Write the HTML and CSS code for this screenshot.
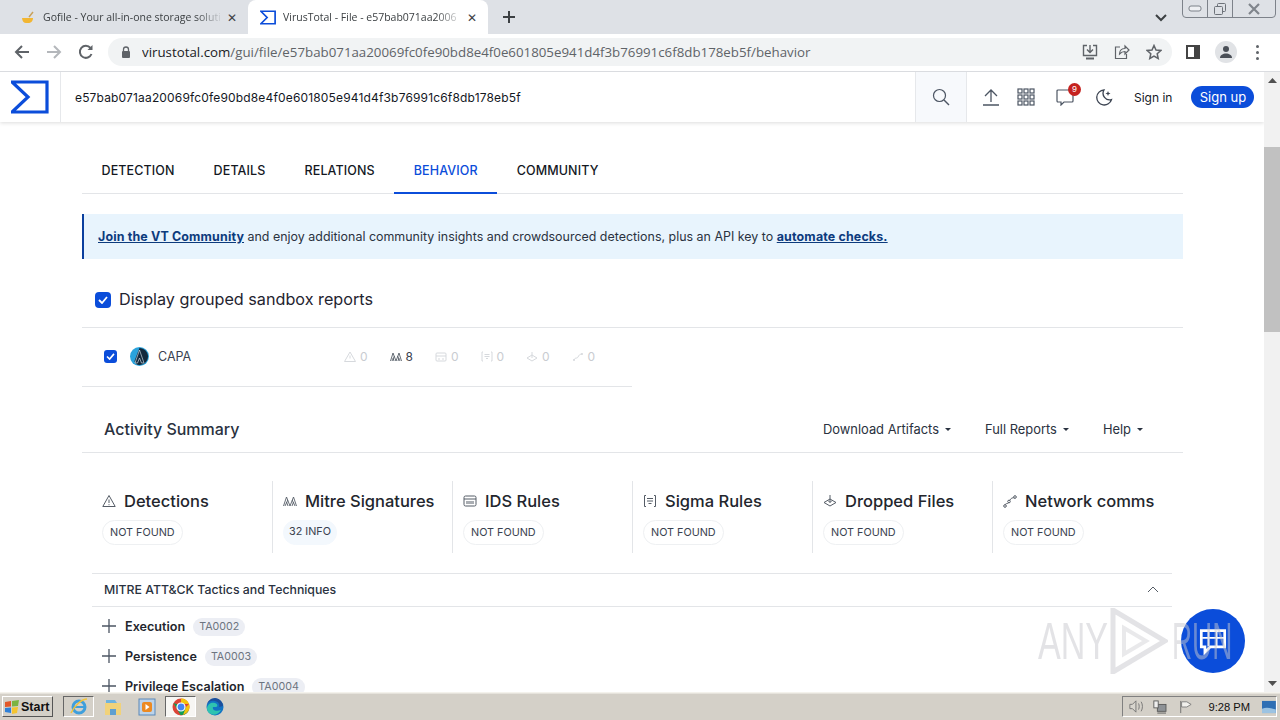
FILE: index.html
```html
<!DOCTYPE html>
<html lang="en">
<head>
  <meta charset="UTF-8">
  <title>VirusTotal - File</title>
  <link rel="stylesheet" href="styles.css">
</head>
<body>

<!-- browser tabs -->
<div class="tab-strip">
  <div class="tab">
    <svg class="tab-icon" width="16" height="16" viewBox="0 0 16 16"><path d="M2 9h11c0 3-2 5-5 5H6c-2 0-4-2-4-5z" fill="#f2b632"/><path d="M9 8l4-5" stroke="#c9a15a" stroke-width="1.5"/></svg>
    <span class="tab-title">Gofile - Your all-in-one storage soluti</span>
    <span class="tab-close">✕</span>
  </div>
  <div class="tab tab-active">
    <svg class="tab-icon" width="16" height="15" viewBox="0 0 18 16"><path d="M1 1h16v14H1l7-7z" fill="none" stroke="#0b4dda" stroke-width="1.9"/></svg>
    <span class="tab-title">VirusTotal - File - e57bab071aa2006</span>
    <span class="tab-close">✕</span>
  </div>
  <svg class="new-tab" width="14" height="14" viewBox="0 0 14 14"><path d="M7 1v12M1 7h12" stroke="#3c4043" stroke-width="2"/></svg>
  <svg class="tab-search" width="12" height="8" viewBox="0 0 12 8"><path d="M1 1l5 5 5-5" fill="none" stroke="#3c4043" stroke-width="2"/></svg>
  <div class="window-buttons">
    <div class="win-btn win-min"><svg width="14" height="8" viewBox="0 0 14 8"><rect x="1" y="1" width="12" height="5" rx="2" fill="#eef0f3" stroke="#7d828a"/></svg></div>
    <div class="win-btn win-max"><svg width="14" height="14" viewBox="0 0 14 14"><rect x="4.500" y="1.500" width="8" height="8" rx="1" fill="none" stroke="#6d7279"/><rect x="1.500" y="4.500" width="8" height="8" rx="1" fill="#dee1e6" stroke="#6d7279"/></svg></div>
    <div class="win-btn win-close"><svg width="14" height="12" viewBox="0 0 14 12"><path d="M2 1l10 10M12 1L2 11" stroke="#80858c" stroke-width="2.200"/></svg></div>
  </div>
</div>

<!-- address bar -->
<div class="toolbar">
  <svg class="nav-icon" width="16" height="16" viewBox="0 0 16 16"><path d="M15 8H2M8 2L2 8l6 6" fill="none" stroke="#5f6368" stroke-width="2"/></svg>
  <svg class="nav-icon nav-off" width="16" height="16" viewBox="0 0 16 16"><path d="M1 8h13M8 2l6 6-6 6" fill="none" stroke="#b4b7bb" stroke-width="2"/></svg>
  <svg class="nav-icon" width="16" height="16" viewBox="0 0 16 16"><path d="M13.500 10A6 6 0 1 1 12.500 4" fill="none" stroke="#5f6368" stroke-width="2"/><path d="M14.500 1v5h-5z" fill="#5f6368"/></svg>
  <div class="omnibox">
    <svg class="lock" width="10" height="12" viewBox="0 0 10 12"><path d="M2.500 5V3.500a2.500 2.500 0 0 1 5 0V5" fill="none" stroke="#5f6368" stroke-width="1.300"/><rect x="1" y="5" width="8" height="7" rx="1" fill="#5f6368"/></svg>
    <div class="url"><span class="url-host">virustotal.com</span>/gui/file/e57bab071aa20069fc0fe90bd8e4f0e601805e941d4f3b76991c6f8db178eb5f/behavior</div>
    <svg class="omni-icon" width="16" height="16" viewBox="0 0 16 16"><path d="M5 1.500H1.500v10h13v-10H11M8 1v7M5 5.500L8 8.500l3-3" fill="none" stroke="#5f6368" stroke-width="1.400"/><path d="M4 14.500h8" stroke="#5f6368" stroke-width="2"/></svg>
    <svg class="omni-icon" width="16" height="16" viewBox="0 0 16 16"><path d="M6 3H1.500v11.500h11V10M5.500 10c0-4 3-5.500 5.500-5.500V2l4 4-4 4V7.500c-2 0-4 .8-5.500 2.500z" fill="none" stroke="#5f6368" stroke-width="1.200"/></svg>
    <svg class="omni-icon" width="16" height="16" viewBox="0 0 16 16"><path d="M8 1.500l2 4.500 4.800.5-3.600 3.200 1 4.800L8 12l-4.200 2.500 1-4.800L1.200 6.500 6 6z" fill="none" stroke="#5f6368" stroke-width="1.500"/></svg>
  </div>
  <svg class="side-panel" width="14" height="14" viewBox="0 0 14 14"><rect x="1" y="1" width="12" height="12" fill="none" stroke="#444" stroke-width="2"/><rect x="8" y="1" width="5" height="12" fill="#444"/></svg>
  <div class="profile"><svg width="14" height="14" viewBox="0 0 14 14"><circle cx="7" cy="4" r="3" fill="#4a4f57"/><path d="M1 13c0-3 3-4.500 6-4.500s6 1.500 6 4.500z" fill="#4a4f57"/></svg></div>
  <div class="kebab"><i></i><i></i><i></i></div>
</div>

<div class="viewport">
  <div class="page">

    <!-- site header -->
    <div class="site-header">
      <div class="logo-cell">
        <svg width="38" height="34" viewBox="0 0 38 34"><path d="M1 2h35v30H1l16-15z" fill="none" stroke="#0b4dda" stroke-width="3.200"/></svg>
      </div>
      <div class="search-text">e57bab071aa20069fc0fe90bd8e4f0e601805e941d4f3b76991c6f8db178eb5f</div>
      <div class="search-btn">
        <svg width="18" height="18" viewBox="0 0 18 18"><circle cx="7.500" cy="7.500" r="6" fill="none" stroke="#4c5563" stroke-width="1.200"/><path d="M12 12l5 5" stroke="#4c5563" stroke-width="1.400"/></svg>
      </div>
      <div class="header-actions">
        <svg class="upload-icon" width="18" height="18" viewBox="0 0 18 18"><path d="M9 14V2M3 8l6-6 6 6M1 17h16" fill="none" stroke="#4c5563" stroke-width="1.300"/></svg>
        <svg width="18" height="18" viewBox="0 0 18 18" fill="none" stroke="#4c5563" stroke-width="1.200"><rect x="1" y="1" width="4" height="4"/><rect x="7" y="1" width="4" height="4"/><rect x="13" y="1" width="4" height="4"/><rect x="1" y="7" width="4" height="4"/><rect x="7" y="7" width="4" height="4"/><rect x="13" y="7" width="4" height="4"/><rect x="1" y="13" width="4" height="4"/><rect x="7" y="13" width="4" height="4"/><rect x="13" y="13" width="4" height="4"/></svg>
        <div class="chat-icon">
          <svg width="18" height="18" viewBox="0 0 18 18"><path d="M2 2h14a1 1 0 0 1 1 1v10a1 1 0 0 1-1 1H8l-3 3v-3H2a1 1 0 0 1-1-1V3a1 1 0 0 1 1-1z" fill="none" stroke="#4c5563" stroke-width="1.200"/></svg>
          <span class="chat-badge">9</span>
        </div>
        <svg width="18" height="18" viewBox="0 0 18 18"><path d="M9 2a7.500 7.500 0 1 0 7.500 9.500A6.500 6.500 0 0 1 9 2z" fill="none" stroke="#3a4250" stroke-width="1.300"/><path d="M13 3l.7 1.800 1.800.7-1.800.7-.7 1.800-.7-1.800-1.800-.7 1.800-.7z" fill="#3a4250"/></svg>
        <span class="sign-in">Sign in</span>
        <span class="sign-up">Sign up</span>
      </div>
    </div>

    <!-- file tabs -->
    <div class="file-tabs">
      <div class="file-tab">DETECTION</div>
      <div class="file-tab">DETAILS</div>
      <div class="file-tab">RELATIONS</div>
      <div class="file-tab file-tab-active">BEHAVIOR</div>
      <div class="file-tab">COMMUNITY</div>
    </div>

    <div class="notice">
      <a class="notice-link">Join the VT Community</a> and enjoy additional community insights and crowdsourced detections, plus an API key to <a class="notice-link">automate checks.</a>
    </div>

    <div class="group-row">
      <span class="check check-big"><svg width="10" height="8" viewBox="0 0 10 8"><path d="M1 4l3 3 5-6" fill="none" stroke="#fff" stroke-width="1.800"/></svg></span>
      <span class="group-label">Display grouped sandbox reports</span>
    </div>

    <div class="sandbox-row">
      <span class="check"><svg width="9" height="7" viewBox="0 0 10 8"><path d="M1 4l3 3 5-6" fill="none" stroke="#fff" stroke-width="1.800"/></svg></span>
      <svg class="capa-logo" width="19" height="19" viewBox="0 0 19 19"><circle cx="9.500" cy="9.500" r="9.500" fill="#2aa3dc"/><path d="M9.500 1C14 1 18 5 18 9.500S14 18 9.500 18c-3 0-5-2-5-4z" fill="#12293d"/><path d="M9.500 3L5 16h2.500l2-5 2 5H14z" fill="#12293d" stroke="#e8f3fa" stroke-width=".6"/></svg>
      <span class="sandbox-name">CAPA</span>
      <div class="sandbox-stats">
        <span class="stat"><svg width="12" height="11" viewBox="0 0 12 11"><path d="M6 1l5.500 9.500H.5zM6 4.500v3" fill="none" stroke="#d6d9dd"/></svg>0</span>
        <span class="stat stat-on"><svg width="12" height="11" viewBox="0 0 12 11"><path d="M.5 10L3 2l3 8 3-8 2.500 8M2 10l2.500-5M7.500 5L10 10M4 10l-1-3M9 7l-1 3" fill="none" stroke="#555c66" stroke-width=".9"/></svg>8</span>
        <span class="stat"><svg width="12" height="11" viewBox="0 0 12 11"><rect x="1" y="2" width="10" height="8" rx="1" fill="none" stroke="#d6d9dd"/><path d="M1 5h10M4 7v2M8 7v2" stroke="#d6d9dd"/></svg>0</span>
        <span class="stat"><svg width="12" height="11" viewBox="0 0 12 11"><path d="M2 1H1v9h1M10 1h1v9h-1M3.500 3.500h5M3.500 5.500h5M5 7.500h2" fill="none" stroke="#d6d9dd"/></svg>0</span>
        <span class="stat"><svg width="12" height="11" viewBox="0 0 12 11"><path d="M6 4l5 3-5 3-5-3zM6 1v6" fill="none" stroke="#d6d9dd"/></svg>0</span>
        <span class="stat"><svg width="12" height="11" viewBox="0 0 12 11"><path d="M2 9c1-3 3-1 4-3s2-3 4-3" fill="none" stroke="#d6d9dd"/><circle cx="2" cy="9" r="1" fill="#d6d9dd"/><circle cx="10" cy="3" r="1" fill="#d6d9dd"/></svg>0</span>
      </div>
    </div>

    <!-- activity summary -->
    <div class="activity-head">
      <div class="activity-title">Activity Summary</div>
      <div class="activity-menu">
        <span class="caret-item">Download Artifacts</span>
        <span class="caret-item">Full Reports</span>
        <span class="caret-item">Help</span>
      </div>
    </div>

    <div class="summary-grid">
      <div class="summary-cell">
        <div class="summary-title"><svg width="14" height="14" viewBox="0 0 14 14"><path d="M7 1.500l6.200 11H.8zM7 5.500v3.500M7 10.200v1" fill="none" stroke="#555c66"/></svg>Detections</div>
        <span class="pill">NOT FOUND</span>
      </div>
      <div class="summary-cell">
        <div class="summary-title"><svg width="14" height="14" viewBox="0 0 14 14"><path d="M.5 12L3.500 3l3.500 9 3.500-9 3 9M2 12l2.800-6M9.200 6L12 12M5 12L3.500 8M10.500 8L9 12" fill="none" stroke="#555c66" stroke-width=".9"/></svg>Mitre Signatures</div>
        <span class="pill pill-info">32 INFO</span>
      </div>
      <div class="summary-cell">
        <div class="summary-title"><svg width="14" height="14" viewBox="0 0 14 14"><rect x="1" y="2" width="12" height="10" rx="1.500" fill="none" stroke="#555c66"/><path d="M1 5h12M4 7v3M6 7v3M8 7v3M10 7v3" stroke="#555c66"/></svg>IDS Rules</div>
        <span class="pill">NOT FOUND</span>
      </div>
      <div class="summary-cell">
        <div class="summary-title"><svg width="14" height="14" viewBox="0 0 14 14"><path d="M3 1.500H1.500v11H3M11 1.500h1.500v11H11M4 4.500h6M4 7h6M5.500 9.500h3" fill="none" stroke="#555c66"/></svg>Sigma Rules</div>
        <span class="pill">NOT FOUND</span>
      </div>
      <div class="summary-cell">
        <div class="summary-title"><svg width="14" height="14" viewBox="0 0 14 14"><path d="M7 5l6 3.500L7 12 1 8.500zM7 1v7.500M5 6.500l2 2 2-2" fill="none" stroke="#555c66"/></svg>Dropped Files</div>
        <span class="pill">NOT FOUND</span>
      </div>
      <div class="summary-cell">
        <div class="summary-title"><svg width="14" height="14" viewBox="0 0 14 14"><path d="M2 12c0-4 3-1 4-4s3-5 6-4" fill="none" stroke="#555c66"/><circle cx="2" cy="12" r="1.300" fill="#fff" stroke="#555c66"/><circle cx="6" cy="7.500" r="1.300" fill="#fff" stroke="#555c66"/><circle cx="12" cy="3" r="1.300" fill="#fff" stroke="#555c66"/></svg>Network comms</div>
        <span class="pill">NOT FOUND</span>
      </div>
    </div>

    <!-- mitre table -->
    <div class="mitre">
      <div class="mitre-head">
        <span>MITRE ATT&amp;CK Tactics and Techniques</span>
        <svg width="12" height="7" viewBox="0 0 12 7"><path d="M1 6l5-5 5 5" fill="none" stroke="#555c66"/></svg>
      </div>
      <div class="tactic"><svg width="14" height="14" viewBox="0 0 14 14"><path d="M7 0v14M0 7h14" stroke="#4c5563" stroke-width="1.300"/></svg><span class="tactic-name">Execution</span><span class="tactic-id">TA0002</span></div>
      <div class="tactic"><svg width="14" height="14" viewBox="0 0 14 14"><path d="M7 0v14M0 7h14" stroke="#4c5563" stroke-width="1.300"/></svg><span class="tactic-name">Persistence</span><span class="tactic-id">TA0003</span></div>
      <div class="tactic"><svg width="14" height="14" viewBox="0 0 14 14"><path d="M7 0v14M0 7h14" stroke="#4c5563" stroke-width="1.300"/></svg><span class="tactic-name">Privilege Escalation</span><span class="tactic-id">TA0004</span></div>
    </div>

    <!-- overlays -->
    <div class="chat-fab">
      <svg width="30" height="27" viewBox="0 0 32 30"><path d="M3 3h26v18H13l-6 6v-6H3z" fill="none" stroke="#fff" stroke-width="3"/><path d="M11 4v16M20 4v16M4 11h24" stroke="#fff" stroke-width="2"/></svg>
    </div>
    <div class="watermark">
      <span class="wm-any">ANY</span>
      <svg class="wm-play" width="58" height="66" viewBox="0 0 58 66"><path d="M3 2v62l52-31z" fill="none" stroke="#c8c8cd" stroke-opacity=".5" stroke-width="5"/><path d="M14 20v26l22-13z" fill="none" stroke="#c8c8cd" stroke-opacity=".4" stroke-width="4"/></svg>
      <span class="wm-run">RUN</span>
    </div>
  </div>

  <div class="scrollbar">
    <div class="scroll-arrow"><svg width="9" height="5" viewBox="0 0 9 5"><path d="M4.500 0L9 5H0z" fill="#505050"/></svg></div>
    <div class="scroll-track"><div class="scroll-thumb"></div></div>
    <div class="scroll-arrow"><svg width="9" height="5" viewBox="0 0 9 5"><path d="M0 0h9L4.500 5z" fill="#505050"/></svg></div>
  </div>
</div>

<!-- windows taskbar -->
<div class="taskbar">
  <div class="start-btn">
    <svg width="16" height="14" viewBox="0 0 16 14"><path d="M1 2l6-1v5.500L1 7z" fill="#e2582a"/><path d="M8 1l7-1-1 6-6 .5z" fill="#7cb342"/><path d="M1 8l6-.5V13l-6-1z" fill="#2f80d8"/><path d="M8 7.500l6-.5-1 6-5 1z" fill="#f4c430"/></svg>
    <span>Start</span>
  </div>
  <div class="task-btn">
    <svg width="20" height="20" viewBox="0 0 20 20"><circle cx="10" cy="10" r="6" fill="none" stroke="#3f9fdc" stroke-width="3"/><path d="M4 10h12" stroke="#3f9fdc" stroke-width="2"/><path d="M2 16C6 8 13 2 18 2" fill="none" stroke="#f2c33a" stroke-width="1.500"/></svg>
  </div>
  <div class="task-icon">
    <svg width="18" height="18" viewBox="0 0 18 18"><path d="M1 5h16v12H1z" fill="#f1d27a"/><path d="M2 2h9l2 3H2z" fill="#6fb3df"/><path d="M6 11h6v6H6z" fill="#5f9fd0"/></svg>
  </div>
  <div class="task-icon task-player">
    <svg width="18" height="18" viewBox="0 0 18 18"><rect x="1" y="1" width="16" height="16" fill="#bcd3ea" stroke="#5a88b8"/><rect x="4" y="4" width="10" height="10" rx="2" fill="#ec8a22"/><path d="M7.500 6l4 3-4 3z" fill="#fff"/></svg>
  </div>
  <div class="task-btn task-btn-on">
    <svg width="18" height="18" viewBox="0 0 18 18"><circle cx="9" cy="9" r="8.500" fill="#dc4437"/><path d="M9 .5A8.500 8.500 0 0 1 17 6H9z" fill="#f4c20d"/><path d="M1.500 5L5 11l3.500 6A8.500 8.500 0 0 0 16.500 13L13 9z" fill="#0f9d58"/><path d="M17 6a8.500 8.500 0 0 1-6 11l3-8z" fill="#f4c20d"/><circle cx="9" cy="9" r="4" fill="#4285f4" stroke="#fff" stroke-width="1.200"/></svg>
  </div>
  <div class="task-icon">
    <svg width="18" height="18" viewBox="0 0 18 18"><circle cx="9" cy="9" r="8.500" fill="#1273c4"/><path d="M1 10c1-5 5-6 8-5 3 1 3 4 1 4H7c-1 3 3 5 8 3-2 4-7 6-10 4-3-1-4-3-4-6z" fill="#2fc3b0"/><path d="M17 8c0-4-4-8-8-8C5 0 2 3 1 6c2-3 5-4 8-3 4 1 5 4 4 6z" fill="#1c4f9c"/></svg>
  </div>
  <div class="tray">
    <svg width="17" height="15" viewBox="0 0 17 15"><path d="M1 5h3l4-4v13l-4-4H1z" fill="#d8d5ce" stroke="#6e6e6e"/><path d="M11 4c1 2 1 5 0 7M14 2c2 3 2 8 0 11" fill="none" stroke="#6e6e6e"/></svg>
    <svg width="16" height="16" viewBox="0 0 16 16"><rect x="5" y="5" width="10" height="8" fill="#8e9296" stroke="#555"/><rect x="1" y="1" width="5" height="8" fill="#efefef" stroke="#555"/><path d="M5 15h10" stroke="#555"/></svg>
    <svg class="tray-flag" width="16" height="16" viewBox="0 0 16 16"><path d="M2 1v14" stroke="#666"/><path d="M3 2h6l5 3-5 3H3z" fill="#f1f0ec" stroke="#777"/></svg>
    <span class="clock">9:28 PM</span>
    <svg class="show-desktop" width="16" height="14" viewBox="0 0 16 14"><rect width="16" height="14" fill="#2f6fb4"/><path d="M0 9c5-2 10-1 16 1v4H0z" fill="#9cc3e2"/></svg>
  </div>
</div>

</body>
</html>
```

FILE: styles.css
```css
/* whole window */
html, body {
  margin: 0;
  height: 720px;
  overflow: hidden;
}
body {
  display: flex;
  flex-direction: column;
  background-color: #fff;
  font-family: Inter, "Liberation Sans", sans-serif;
  color: #1f2430;
}

/* browser tabs */
.tab-strip {
  height: 34px;
  flex-shrink: 0;
  display: flex;
  align-items: center;
  padding-left: 8px;
  background-color: #dee1e6;
  position: relative;
}
.tab {
  width: 240px;
  height: 34px;
  box-sizing: border-box;
  display: flex;
  align-items: center;
  padding: 0 11px 0 12px;
  font-family: "Open Sans", "Liberation Sans", sans-serif;
  font-size: 10.5px;
  color: #3c4043;
}
.tab-active {
  background-color: #fff;
  border-radius: 8px 8px 0 0;
}
.tab-icon {
  flex-shrink: 0;
  margin-right: 7px;
}
.tab-title {
  flex: 1;
  white-space: nowrap;
  -webkit-mask-image: linear-gradient(to right, #000 85%, transparent 100%);
  mask-image: linear-gradient(to right, #000 85%, transparent 100%);
}
.tab-close {
  margin-left: 4px;
  font-size: 12px;
  color: #3c4043;
}
.new-tab {
  margin-left: 14px;
}
.tab-search {
  margin-left: auto;
  margin-right: 113px;
  margin-top: 2px;
}
.window-buttons {
  position: absolute;
  top: -1px;
  right: 4px;
  display: flex;
  height: 17px;
  border: 1px solid #7d828a;
  border-radius: 0 0 4px 4px;
}
.win-btn {
  display: flex;
  align-items: center;
  justify-content: center;
  border-right: 1px solid #7d828a;
}
.win-min { width: 24px; }
.win-max { width: 24px; }
.win-close { width: 42px; border-right: 0; }

/* address bar */
.toolbar {
  height: 38px;
  flex-shrink: 0;
  box-sizing: border-box;
  display: flex;
  align-items: center;
  padding: 0 0 1px 14px;
  background-color: #fff;
  border-bottom: 1px solid #dadce0;
}
.nav-icon {
  margin-right: 16px;
}
.omnibox {
  width: 1064px;
  height: 28px;
  margin-left: -2px;
  flex-shrink: 0;
  box-sizing: border-box;
  display: flex;
  align-items: center;
  padding: 0 10px 0 13px;
  border-radius: 14px;
  background-color: #f1f3f4;
}
.lock {
  margin-right: 11px;
}
.url {
  flex: 1;
  font-family: "Open Sans", "Liberation Sans", sans-serif;
  font-size: 13.3px;
  color: #5f6368;
  white-space: nowrap;
  overflow: hidden;
}
.url-host {
  color: #202124;
}
.omni-icon {
  margin-left: 16px;
}
.side-panel {
  margin-left: 14px;
}
.profile {
  width: 22px;
  height: 22px;
  margin-left: 15px;
  display: flex;
  align-items: center;
  justify-content: center;
  border-radius: 50%;
  background-color: #e1e3e6;
}
.kebab {
  margin-left: 19px;
  display: flex;
  flex-direction: column;
  gap: 3px;
}
.kebab i {
  width: 3px;
  height: 3px;
  border-radius: 50%;
  background-color: #5f6368;
}

/* page + scrollbar */
.viewport {
  flex: 1;
  display: flex;
  min-height: 0;
}
.page {
  flex: 1;
  position: relative;
  overflow: hidden;
  min-width: 0;
}
.scrollbar {
  width: 16px;
  display: flex;
  flex-direction: column;
  background-color: #f1f1f1;
}
.scroll-arrow {
  height: 17px;
  display: flex;
  align-items: center;
  justify-content: center;
}
.scroll-track {
  flex: 1;
  padding-top: 58px;
}
.scroll-thumb {
  height: 185px;
  background-color: #c1c1c1;
}

/* site header */
.site-header {
  height: 50px;
  display: flex;
  align-items: stretch;
  box-shadow: 0 1px 4px rgba(0, 0, 0, .14);
}
.logo-cell {
  width: 61px;
  box-sizing: border-box;
  display: flex;
  align-items: center;
  padding-left: 11px;
  border-right: 1px solid #e6e8eb;
}
.search-text {
  flex: 1;
  display: flex;
  align-items: center;
  padding-left: 14px;
  font-size: 12px;
  letter-spacing: .16px;
  color: #14181f;
}
.search-btn {
  width: 52px;
  box-sizing: border-box;
  display: flex;
  align-items: center;
  justify-content: center;
  background-color: #f7f9fc;
  border-left: 1px solid #e6e8eb;
  border-right: 1px solid #e6e8eb;
}
.header-actions {
  width: 297px;
  box-sizing: border-box;
  display: flex;
  align-items: center;
  padding-left: 15px;
  gap: 21px;
}
.upload-icon {
  margin-right: -4px;
}
.chat-icon {
  position: relative;
  display: flex;
}
.chat-badge {
  position: absolute;
  top: -5px;
  right: -7px;
  width: 13px;
  height: 13px;
  border-radius: 50%;
  background-color: #c5221f;
  color: #fff;
  font-size: 8px;
  line-height: 13px;
  text-align: center;
}
.sign-in {
  font-size: 12px;
  color: #14181f;
}
.sign-up {
  margin-left: -2px;
  width: 63px;
  height: 22px;
  line-height: 23px;
  border-radius: 11px;
  background-color: #0b4dda;
  color: #fff;
  font-size: 13px;
  text-align: center;
}

/* file tabs */
.file-tabs {
  margin: 26px 81px 0 82px;
  height: 45px;
  display: flex;
  border-bottom: 1px solid #e3e5e8;
}
.file-tab {
  padding: 0 19.500px;
  font-size: 12.5px;
  font-weight: 500;
  letter-spacing: .12px;
  line-height: 45px;
  color: #14181f;
}
.file-tab-active {
  color: #0b4dda;
  border-bottom: 2px solid #0b4dda;
  height: 44px;
}

/* notice */
.notice {
  margin: 20px 81px 0 82px;
  height: 45px;
  box-sizing: border-box;
  padding-left: 14px;
  line-height: 45px;
  font-size: 12.45px;
  color: #2a3240;
  background-color: #e8f4fd;
  border-left: 2px solid #0b3f9e;
  white-space: nowrap;
}
.notice-link {
  font-weight: 700;
  letter-spacing: .15px;
  color: #0d3b7d;
  text-decoration: underline;
}

/* sandbox checkboxes */
.group-row {
  margin: 0 81px 0 82px;
  height: 69px;
  box-sizing: border-box;
  display: flex;
  align-items: center;
  padding: 13px 0 0 13px;
  border-bottom: 1px solid #e3e5e8;
}
.check {
  width: 13px;
  height: 13px;
  flex-shrink: 0;
  display: flex;
  align-items: center;
  justify-content: center;
  border-radius: 3px;
  background-color: #0b4dda;
}
.check-big {
  width: 16px;
  height: 16px;
  border-radius: 4px;
}
.group-label {
  margin: 0 0 2px 8px;
  font-size: 16.2px;
  color: #1f2430;
}
.sandbox-row {
  width: 550px;
  margin-left: 82px;
  height: 59px;
  box-sizing: border-box;
  display: flex;
  align-items: center;
  padding: 0 0 2px 22px;
  border-bottom: 1px solid #e3e5e8;
}
.capa-logo {
  margin-left: 13px;
}
.sandbox-name {
  width: 186px;
  margin-left: 9px;
  font-size: 12.5px;
  color: #3a4250;
}
.sandbox-stats {
  display: flex;
  gap: 16.500px;
}
.stat {
  width: 29px;
  display: flex;
  align-items: center;
  gap: 4px;
  font-size: 12px;
  color: #c9ccd1;
}
.stat-on {
  color: #3a4250;
}

/* activity summary */
.activity-head {
  margin: 0 81px 0 82px;
  height: 66px;
  box-sizing: border-box;
  display: flex;
  align-items: center;
  justify-content: space-between;
  padding: 18px 40px 0 22px;
  border-bottom: 1px solid #e3e5e8;
}
.activity-title {
  font-size: 16px;
  font-weight: 500;
  color: #2a3240;
}
.activity-menu {
  display: flex;
  gap: 34px;
  padding-top: 1px;
  font-size: 12.9px;
  color: #2a3240;
}
.caret-item::after {
  content: "";
  display: inline-block;
  margin-left: 6px;
  vertical-align: middle;
  border-top: 3px solid #2a3240;
  border-left: 3px solid transparent;
  border-right: 3px solid transparent;
}
.summary-grid {
  margin: 28px 0 0 92px;
  width: 1080px;
  display: grid;
  grid-template-columns: repeat(6, 180px);
}
.summary-cell {
  height: 72px;
  box-sizing: border-box;
  padding: 10px 0 0 10px;
  border-left: 1px solid #e3e5e8;
}
.summary-cell:first-child {
  border-left: 0;
  padding-left: 10px;
}
.summary-title {
  display: flex;
  align-items: center;
  gap: 8px;
  font-size: 16.5px;
  font-weight: 500;
  color: #23262d;
  white-space: nowrap;
}
.pill {
  display: inline-block;
  margin-top: 9px;
  height: 25px;
  box-sizing: border-box;
  padding: 0 7px;
  line-height: 24px;
  font-size: 10.8px;
  color: #3a4250;
  border: 1px solid #eef0f2;
  border-radius: 13px;
}
.pill-info {
  padding: 0 5px;
  line-height: 22px;
  border-color: #f3f8fd;
  background-color: #f3f8fd;
}

/* mitre table */
.mitre {
  margin: 20px 0 0 92px;
  width: 1080px;
}
.mitre-head {
  height: 34px;
  box-sizing: border-box;
  display: flex;
  align-items: center;
  justify-content: space-between;
  padding: 0 13px 2px 12px;
  font-size: 12.3px;
  font-weight: 500;
  color: #2a3240;
  border-top: 1px solid #e3e5e8;
  border-bottom: 1px solid #e3e5e8;
}
.tactic {
  height: 30px;
  display: flex;
  align-items: center;
  padding-left: 10px;
}
.mitre-head + .tactic {
  margin-top: 4px;
}
.tactic-name {
  margin-left: 9px;
  font-size: 12.6px;
  font-weight: 600;
  color: #23262d;
}
.tactic-id {
  margin: 1px 0 0 8px;
  padding: 0 6px;
  height: 18px;
  line-height: 18px;
  font-size: 10.7px;
  color: #6c7480;
  background-color: #eceef4;
  border-radius: 9px;
}

/* overlays on the page */
.chat-fab {
  position: absolute;
  left: 1181px;
  top: 537px;
  width: 64px;
  height: 64px;
  display: flex;
  align-items: center;
  justify-content: center;
  border-radius: 50%;
  background-color: #0b4dda;
}
.watermark {
  position: absolute;
  left: 1038px;
  top: 536px;
  display: flex;
  align-items: center;
  font-family: "Liberation Sans", sans-serif;
  font-size: 52px;
  color: rgba(200, 200, 205, .5);
  white-space: nowrap;
}
.wm-any {
  width: 70px;
  transform: scaleX(.655);
  transform-origin: left center;
}
.wm-run {
  width: 60px;
  transform: scaleX(.535);
  transform-origin: left center;
}
.wm-play {
  margin: 0 4px 0 2px;
}

/* windows taskbar */
.taskbar {
  height: 28px;
  flex-shrink: 0;
  box-sizing: border-box;
  display: flex;
  align-items: center;
  padding-left: 2px;
  background-color: #d4d0c8;
  border-top: 1px solid #f4f2ec;
  box-shadow: inset 0 1px 0 #e6e3dc;
}
.start-btn {
  width: 51px;
  height: 21px;
  box-sizing: border-box;
  display: flex;
  align-items: center;
  gap: 1px;
  padding-left: 1px;
  font-family: "Liberation Sans", sans-serif;
  font-size: 12.5px;
  font-weight: 700;
  color: #111;
  border: 1px solid;
  border-color: #fff #555 #555 #fff;
}
.task-btn {
  width: 31px;
  height: 21px;
  box-sizing: border-box;
  display: flex;
  align-items: center;
  justify-content: center;
  margin-left: 10px;
  border: 1px solid;
  border-color: #666 #fff #fff #666;
}
.task-icon {
  width: 18px;
  margin-left: 10px;
  display: flex;
}
.task-player {
  margin-left: 16px;
}
.task-btn-on {
  margin-left: 9px;
  background-color: #f7f6f3;
}
.tray {
  margin-left: auto;
  margin-right: 3px;
  width: 155px;
  height: 21px;
  box-sizing: border-box;
  display: flex;
  align-items: center;
  gap: 9px;
  padding-left: 6px;
  border: 1px solid;
  border-color: #808080 #fff #fff #808080;
}
.tray-flag {
  margin-left: 3px;
}
.clock {
  margin-left: 7px;
  font-family: "Liberation Sans", sans-serif;
  font-size: 11.2px;
  color: #111;
  white-space: nowrap;
}
.show-desktop {
  margin-left: 3px;
}
```
